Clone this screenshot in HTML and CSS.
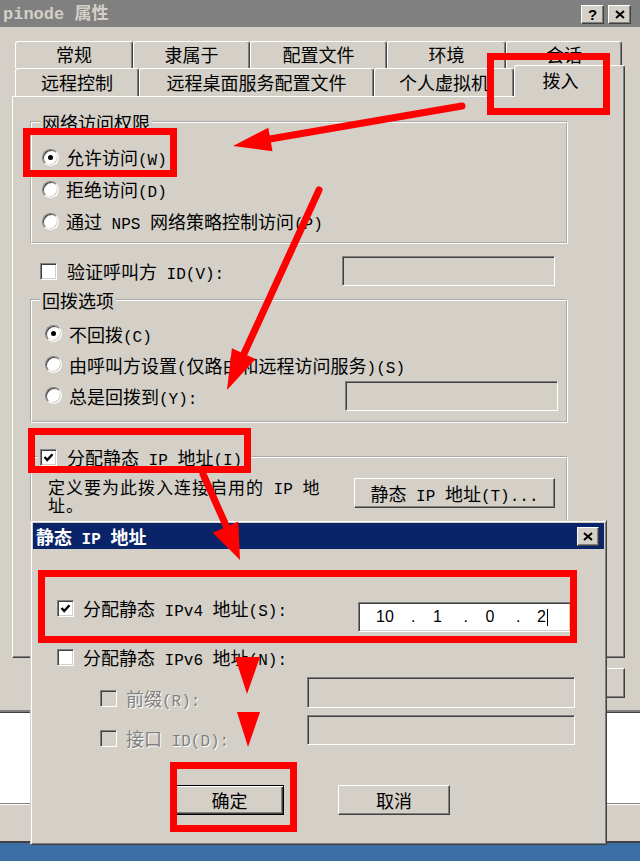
FILE: index.html
```html
<!DOCTYPE html>
<html lang="zh-CN">
<head>
<meta charset="utf-8">
<title>pinode 属性</title>
<link rel="stylesheet" href="styles.css">
</head>
<body>
<div class="screen">
  <div class="win main">
    <div class="titlebar">
      <span class="title">pinode 属性</span>
      <div class="caption-btns">
        <span class="cbtn help">?</span>
        <span class="cbtn close"><svg width="10" height="9" viewBox="0 0 10 9"><path d="M1 1 L9 8 M9 1 L1 8" stroke="#000" stroke-width="2"/></svg></span>
      </div>
    </div>
    <div class="tabs">
      <div class="tabrow back">
        <div class="tab t-gen">常规</div>
        <div class="tab t-mem">隶属于</div>
        <div class="tab t-prof">配置文件</div>
        <div class="tab t-env">环境</div>
        <div class="tab t-ses">会话</div>
      </div>
      <div class="tabrow front">
        <div class="tab t-rc">远程控制</div>
        <div class="tab t-rds">远程桌面服务配置文件</div>
        <div class="tab t-vm">个人虚拟机</div>
        <div class="tab t-dial active">拨入</div>
      </div>
      <div class="panel">
        <fieldset class="group g-access">
          <legend>网络访问权限</legend>
          <div class="opts">
            <div class="opt"><span class="radio on"></span><span>允许访问<span class="en">(W)</span></span></div>
            <div class="opt"><span class="radio"></span><span>拒绝访问<span class="en">(D)</span></span></div>
            <div class="opt"><span class="radio"></span><span>通过<span class="en"> NPS </span>网络策略控制访问<span class="en">(P)</span></span></div>
          </div>
        </fieldset>
        <div class="verify">
          <span class="check"></span><span>验证呼叫方<span class="en"> ID(V):</span></span>
          <span class="field verify-field"></span>
        </div>
        <fieldset class="group g-callback">
          <legend>回拨选项</legend>
          <div class="opts">
            <div class="opt"><span class="radio on"></span><span>不回拨<span class="en">(C)</span></span></div>
            <div class="opt"><span class="radio"></span><span>由呼叫方设置<span class="en">(</span>仅路由和远程访问服务<span class="en">)(S)</span></span></div>
            <div class="opt"><span class="radio"></span><span>总是回拨到<span class="en">(Y):</span></span><span class="field cb-field"></span></div>
          </div>
        </fieldset>
        <fieldset class="group g-ip">
          <legend class="chk-legend"><span class="check"><svg width="13" height="13" viewBox="0 0 13 13"><path d="M2.5 6 L5.2 9 L10.5 3.2" fill="none" stroke="#000" stroke-width="2.4"/></svg></span><span>分配静态<span class="en"> IP </span>地址<span class="en">(I)</span></span></legend>
          <div class="ip-body">
            <p class="desc">定义要为此拨入连接启用的<span class="en"> IP </span>地址。</p>
            <span class="btn static-btn"><span>静态<span class="en"> IP </span>地址<span class="en">(T)...</span></span></span>
          </div>
        </fieldset>
      </div>
      <div class="mainbtns">
        <span class="btn mbtn">确定</span>
        <span class="btn mbtn">取消</span>
        <span class="btn mbtn"><span>应用<span class="en">(A)</span></span></span>
      </div>
    </div>
  </div>
  <div class="behind">
    <div class="behind-white"></div>
    <div class="behind-grey"></div>
  </div>

  <div class="win dlg">
    <div class="dtitle">
      <span class="dtitle-text">静态<span class="en"> IP </span>地址</span>
      <span class="cbtn dclose"><svg width="10" height="9" viewBox="0 0 10 9"><path d="M1 1 L9 8 M9 1 L1 8" stroke="#000" stroke-width="2"/></svg></span>
    </div>
    <div class="dbody">
      <div class="drow r-v4">
        <span class="lbl"><span class="check"><svg width="13" height="13" viewBox="0 0 13 13"><path d="M2.5 6 L5.2 9 L10.5 3.2" fill="none" stroke="#000" stroke-width="2.4"/></svg></span><span>分配静态<span class="en"> IPv4 </span>地址<span class="en">(S):</span></span></span>
        <span class="field white ipfield">
          <span class="seg">10</span><span class="dot">.</span><span class="seg">1</span><span class="dot">.</span><span class="seg">0</span><span class="dot">.</span><span class="seg last">2<span class="caret"></span></span>
        </span>
      </div>
      <div class="drow r-v6">
        <span class="lbl"><span class="check"></span><span>分配静态<span class="en"> IPv6 </span>地址<span class="en">(N):</span></span></span>
      </div>
      <div class="drow r-prefix">
        <span class="lbl sub disabled"><span class="check dis"></span><span>前缀<span class="en">(R):</span></span></span>
        <span class="field wide-field f-prefix"></span>
      </div>
      <div class="drow r-iface">
        <span class="lbl sub disabled"><span class="check dis"></span><span>接口<span class="en"> ID(D):</span></span></span>
        <span class="field wide-field f-iface"></span>
      </div>
      <div class="drow r-btns">
        <span class="btn default ok">确定</span>
        <span class="btn cancel">取消</span>
      </div>
    </div>
  </div>

  <svg class="annot" width="640" height="861" viewBox="0 0 640 861">
    <g fill="none" stroke="#ff0000" stroke-width="7">
      <rect x="490.5" y="56.5" width="116" height="55"/>
      <rect x="26.5" y="131.5" width="147" height="42"/>
      <rect x="31.5" y="431.5" width="216" height="38"/>
      <rect x="41.5" y="573.5" width="532" height="66"/>
      <rect x="173.5" y="765.5" width="120" height="63"/>
    </g>
    <g stroke="#ff0000" stroke-width="7" stroke-linecap="round">
      <line x1="462" y1="106" x2="264" y2="140"/>
      <line x1="319" y1="190" x2="242" y2="358"/>
      <line x1="203" y1="474" x2="228" y2="530"/>
    </g>
    <g fill="#ff0000">
      <polygon points="233,146 272.5,151.3 268.3,127.7"/>
      <polygon points="227,390 255.5,359 231.9,348.2"/>
      <polygon points="240,560 238.3,521.4 212.7,532.8"/>
      <polygon points="235,657 260,657 247,694"/>
      <polygon points="237,712 260,712 248,747"/>
    </g>
  </svg>
</div>
</body>
</html>
```

FILE: styles.css
```css
* { box-sizing: border-box; }
html, body { margin: 0; padding: 0; }
body {
  width: 640px;
  height: 861px;
  overflow: hidden;
  background: #3a6ea5;
  font-family: "Noto Sans CJK SC", sans-serif;
  font-size: 18px;
  line-height: 20px;
  color: #000;
}
.screen { position: relative; width: 640px; height: 861px; overflow: hidden; background: #3a6ea5; }
.en { font-family: "Liberation Mono", monospace; font-size: 16px; line-height: 12px; }

/* main window */
.main { height: 713px; background: #d4d0c8; border-bottom: 1px solid #404040; box-shadow: inset 0 -2px #808080; }
.titlebar {
  height: 27px;
  display: flex;
  align-items: flex-start;
  background: #808080;
  padding: 0 9px 0 3px;
}
.title {
  margin-top: 5px;
  font: bold 17px/20px "Liberation Mono", "Noto Sans CJK SC", monospace;
  color: #d4d0c8;
}
.caption-btns { margin-left: auto; display: flex; gap: 4px; margin-top: 5px; }
.cbtn {
  width: 23px; height: 19px;
  background: #d4d0c8;
  border: 1px solid; border-color: #fff #404040 #404040 #fff;
  box-shadow: inset -1px -1px #808080;
  display: flex; align-items: center; justify-content: center;
  font: bold 15px/1 "Liberation Sans", sans-serif;
}

.tabs { padding-top: 14px; }
.tabrow { display: flex; padding-left: 15px; }
.tabrow.back { height: 27px; }
.tabrow.front { height: 28px; align-items: flex-end; }
.tab {
  flex: none;
  height: 100%;
  background: #d4d0c8;
  border-top: 1px solid #fff;
  border-left: 1px solid #fff;
  border-right: 1px solid #404040;
  box-shadow: inset -1px 0 #808080;
  border-radius: 3px 3px 0 0;
  text-align: center;
  line-height: 25px;
}
.front .tab { line-height: 26px; }
.t-gen { width: 118px; }
.t-mem { width: 117px; }
.t-prof { width: 137px; }
.t-env { width: 119px; }
.t-ses { width: 116px; }
.t-rc { width: 124px; }
.t-rds { width: 235px; }
.t-vm { width: 140px; }
.t-dial { width: 111px; }
.tab.active {
  height: 32px;
  margin-bottom: -1px;
  position: relative;
  z-index: 2;
  padding-right: 18px;
  line-height: 28px;
}

.panel {
  margin-left: 12px;
  width: 613px;
  height: 562px;
  border-top: 1px solid #fff;
  border-left: 1px solid #fff;
  border-right: 1px solid #404040;
  border-bottom: 1px solid #404040;
  box-shadow: inset -1px -1px #808080;
  padding-left: 17px;
}

.group {
  margin: 15px 0 0 0;
  width: 538px;
  min-width: 0;
  border: 2px groove #fff;
  padding: 0;
}
.group legend { padding: 0 2px; margin-left: 8px; line-height: 20px; }
.opts { padding: 9px 0 5px 10px; }
.opt { height: 32px; display: flex; align-items: center; }
.radio {
  flex: none;
  position: relative;
  width: 17px; height: 17px;
  margin-right: 7px;
  border-radius: 50%;
  background: #fff;
  border: 1px solid; border-color: #808080 #fff #fff #808080;
  box-shadow: inset 1px 1px #404040, inset -1px -1px #d4d0c8;
}
.radio.on::after {
  content: "";
  position: absolute;
  left: 5px; top: 5px;
  width: 5px; height: 5px;
  border-radius: 50%;
  background: #000;
}
.check {
  flex: none;
  width: 17px; height: 17px;
  margin-right: 10px;
  background: #fff;
  border: 1px solid; border-color: #808080 #fff #fff #808080;
  box-shadow: inset 1px 1px #404040, inset -1px -1px #d4d0c8;
  display: flex; align-items: center; justify-content: center;
}
.check.dis { background: #d4d0c8; }
.field {
  flex: none;
  height: 30px;
  background: #d4d0c8;
  border: 1px solid; border-color: #808080 #fff #fff #808080;
  box-shadow: inset 1px 1px #404040, inset -1px -1px #d4d0c8;
}
.field.white { background: #fff; }

.verify { display: flex; align-items: center; height: 30px; margin-top: 12px; padding-left: 10px; }
.verify-field { width: 213px; margin-left: auto; margin-right: 69px; }

.g-callback { margin-top: 4px; }
.g-callback .opts { padding: 8px 0 10px 13px; }
.g-callback .opt { height: 31px; }
.cb-field { width: 213px; margin-left: auto; margin-right: 8px; }

.g-ip { margin-top: 24px; }
.g-ip legend.chk-legend { display: flex; align-items: center; margin-left: 6px; padding: 0 2px; }
.ip-body { display: flex; align-items: flex-start; padding: 11px 0 10px 16px; }
.desc { margin: 0; width: 280px; font-size: 17px; line-height: 17px; letter-spacing: 1px; }
.desc .en { letter-spacing: 0; }
.btn {
  flex: none;
  height: 30px;
  background: #d4d0c8;
  border: 1px solid; border-color: #fff #404040 #404040 #fff;
  box-shadow: inset -1px -1px #808080;
  display: flex; align-items: center; justify-content: center;
}
.static-btn { width: 201px; margin-left: 26px; }

.mainbtns { display: flex; justify-content: flex-end; gap: 8px; margin-top: 10px; padding-right: 15px; }
.mbtn { width: 110px; }

.behind-white { height: 90px; background: #fff; }
.behind-grey {
  height: 40px;
  background: #d4d0c8;
  border-top: 1px solid #808080;
  border-bottom: 2px solid #404040;
  box-shadow: inset 0 1px #fff;
}

/* secondary dialog (window over the first) */
.dlg {
  position: absolute;
  left: 30px; top: 520px;
  width: 577px; height: 325px;
  background: #d4d0c8;
  border: 1px solid; border-color: #d4d0c8 #404040 #404040 #d4d0c8;
  box-shadow: inset 1px 1px #fff, inset -1px -1px #808080;
  padding: 2px;
  z-index: 5;
}
.dtitle {
  height: 26px;
  background: #0a246a;
  display: flex;
  align-items: center;
  padding: 0 5px 0 3px;
}
.dtitle-text { color: #fff; font-weight: bold; }
.dtitle-text .en { font-weight: bold; }
.dclose { margin-left: auto; width: 22px; }
.dbody { padding: 49px 0 0 24px; }
.drow { display: flex; align-items: flex-start; }
.lbl { display: flex; align-items: center; height: 20px; line-height: 20px; }
.lbl .check { margin-right: 9px; }
.lbl.sub { padding-left: 43px; }
.disabled { color: #808080; text-shadow: 1px 1px 0 #fff; }
.disabled .check { border-color: #808080 #fff #fff #808080; }

.ipfield {
  width: 213px;
  margin: 4px 33px 0 auto;
  display: flex; align-items: center;
  padding-left: 4px;
  font: 16px/20px "Liberation Sans", sans-serif;
}
.seg { width: 44px; text-align: center; display: flex; justify-content: center; align-items: center; }
.dot { width: 8.5px; text-align: right; }
.caret { display: inline-block; width: 1px; height: 17px; background: #000; margin-left: 1px; }

.r-v4 { height: 34px; }
.r-v6 { margin-top: 15px; height: 20px; }
.r-prefix { margin-top: 10px; height: 31px; }
.r-prefix .lbl { margin-top: 11px; }
.wide-field { width: 268px; margin-left: auto; margin-right: 29px; }
.f-prefix { height: 31px; }
.r-iface { margin-top: 7px; height: 33px; }
.r-iface .lbl { margin-top: 13px; }
.r-btns { margin-top: 37px; padding-left: 118px; }
.ok { width: 109px; }
.btn.default {
  border-color: #000;
  box-shadow: inset 1px 1px #fff, inset -1px -1px #404040, inset -2px -2px #808080;
}
.cancel { width: 112px; margin-left: 54px; }

.annot { position: absolute; left: 0; top: 0; z-index: 10; pointer-events: none; }
```
